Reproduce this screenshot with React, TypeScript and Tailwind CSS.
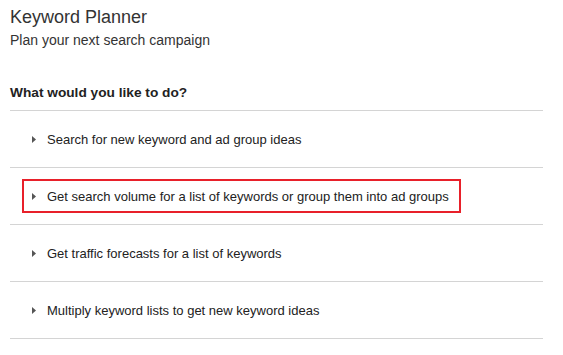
import React from "react";

const items = [
  { text: "Search for new keyword and ad group ideas", active: false },
  { text: "Get search volume for a list of keywords or group them into ad groups", active: true },
  { text: "Get traffic forecasts for a list of keywords", active: false },
  { text: "Multiply keyword lists to get new keyword ideas", active: false },
];

function Arrow() {
  return (
    <svg width="4" height="7" viewBox="0 0 4 7" className="shrink-0">
      <polygon points="0,0 4,3.5 0,7" fill="#555555" />
    </svg>
  );
}

export default function App() {
  return (
    <div
      className="w-[563px] h-[355px] bg-white overflow-hidden pl-[10px] pt-[7px] text-[#222]"
      style={{ fontFamily: '"Liberation Sans", Arial, sans-serif' }}
    >
      <div className="text-[18px] leading-[20px] text-[#333]">Keyword Planner</div>
      <div className="mt-[5px] text-[14px] leading-[16px] text-[#333]">Plan your next search campaign</div>
      <div className="mt-[37px] text-[13.7px] leading-[15px] font-bold text-[#222]">What would you like to do?</div>
      <div className="mt-[10px] w-[533px] border-t border-[#d4d4d4]">
        {items.map((it) => (
          <div key={it.text} className="h-[57px] flex items-center border-b border-[#d4d4d4]">
            <div
              className={
                it.active
                  ? "ml-[12px] h-[34px] inline-flex items-center border-2 border-[#e8202a] pl-[8px] pr-[10px]"
                  : "ml-[12px] h-[34px] inline-flex items-center border-2 border-transparent pl-[8px] pr-[10px]"
              }
            >
              <Arrow />
              <span className="ml-[11px] text-[13px] leading-[15px] text-[#222]">{it.text}</span>
            </div>
          </div>
        ))}
      </div>
    </div>
  );
}
